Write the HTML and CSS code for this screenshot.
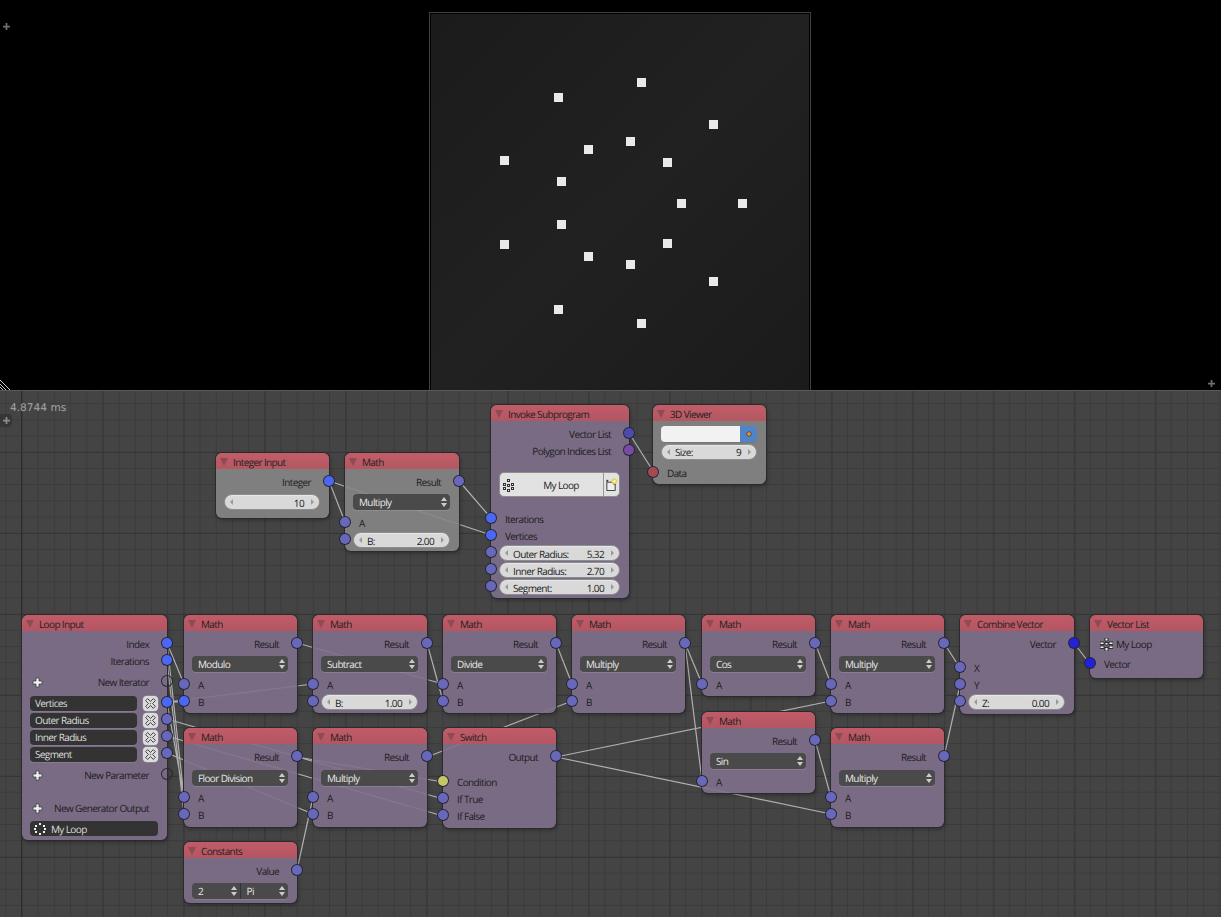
FILE: index.html
```html
<!DOCTYPE html>
<html lang="en">
<head>
<meta charset="utf-8">
<title>Animation Nodes</title>
<link rel="stylesheet" href="styles.css">
</head>
<body>
<svg class="defs" width="0" height="0" aria-hidden="true">
  <symbol id="i-x" viewBox="0 0 16 16"><path d="M4.500 2 8 5.500 11.500 2 14 4.500 10.500 8 14 11.500 11.500 14 8 10.500 4.500 14 2 11.500 5.500 8 2 4.500Z" fill="none" stroke="#333" stroke-width="1.100"/><circle cx="8" cy="8" r="1" fill="#888"/></symbol>
  <symbol id="i-plus" viewBox="0 0 11 11"><path d="M4 1h3v3h3v3H7v3H4V7H1V4h3z" fill="#eee" stroke="#333" stroke-width=".7"/></symbol>
  <symbol id="i-mini" viewBox="0 0 8 8"><path d="M3 0h2v3h3v2H5v3H3V5H0V3h3z" fill="currentColor"/></symbol>
  <symbol id="i-ring" viewBox="0 0 12 12"><path d="M5 0h2v2H5zM1 2h2v2H1zM9 2h2v2H9zM0 5h2v2H0zM10 5h2v2h-2zM1 8h2v2H1zM9 8h2v2H9zM5 10h2v2H5z" fill="#eee"/></symbol>
  <symbol id="i-tree" viewBox="0 0 12 13"><g fill="none" stroke="#333" stroke-width="1" shape-rendering="crispEdges"><path d="M.5 4.500h2v2h-2zM.5 8.500h2v2h-2zM4.500.5h2v2h-2zM4.500 5.500h2v2h-2zM4.500 10.500h2v2h-2zM8.500 4.500h2v2h-2zM8.500 8.500h2v2h-2z"/></g></symbol>
  <symbol id="i-tree-w" viewBox="0 0 13 13"><path d="M5 0h3v3H5zM0 4h4v2.500H0zM5 4.500h3V7H5zM9 4h4v2.500H9zM0 8h4v2.500H0zM9 8h4v2.500H9zM5 9.500h3V13H5z" fill="#eee" stroke="#111" stroke-width=".8"/></symbol>
  <symbol id="i-new" viewBox="0 0 13 14"><path d="M1.500 4.500h7v2h2v7h-9z" fill="#eee" stroke="#333"/><path d="M1 2h2v2H1z" fill="#333"/><circle cx="9.500" cy="3.500" r="3" fill="#e8cf3c"/><path d="M7.800 3.500h3.400M9.500 1.800v3.400" stroke="#fff" stroke-width="1"/></symbol>
</svg>

<section class="preview">
  <button class="corner corner-tl" aria-label="tools"><svg class="ic7"><use href="#i-mini"/></svg></button>
  <svg class="hatch" viewBox="0 0 11 11" aria-hidden="true"><path d="M0 1 10 11M0 5 6 11M0 8 3 11" stroke="#ccc" stroke-width="1" fill="none"/></svg>
  <button class="corner corner-br" aria-label="properties"><svg class="ic7"><use href="#i-mini"/></svg></button>
  <svg class="viewport" viewBox="0 0 382 378" aria-hidden="true">
    <defs>
      <linearGradient id="vp" x1="0" y1="0" x2="1" y2="1"><stop offset="0" stop-color="#1b1b1b"/><stop offset=".5" stop-color="#212121"/><stop offset="1" stop-color="#1b1b1b"/></linearGradient>
    </defs>
    <rect x=".5" y=".5" width="381" height="378" fill="#000" stroke="#404040"/>
    <rect x="2" y="2" width="378" height="376" fill="url(#vp)"/>
    <g fill="#e9e9e9">
      <rect x="125" y="81" width="9" height="9"/><rect x="208" y="66" width="9" height="9"/><rect x="280" y="108" width="9" height="9"/>
      <rect x="71" y="144" width="9" height="9"/><rect x="155" y="133" width="9" height="9"/><rect x="197" y="125" width="9" height="9"/>
      <rect x="234" y="146" width="9" height="9"/><rect x="128" y="165" width="9" height="9"/><rect x="248" y="187" width="9" height="9"/>
      <rect x="309" y="187" width="9" height="9"/><rect x="128" y="208" width="9" height="9"/><rect x="71" y="228" width="9" height="9"/>
      <rect x="155" y="240" width="9" height="9"/><rect x="234" y="227" width="9" height="9"/><rect x="197" y="248" width="9" height="9"/>
      <rect x="280" y="265" width="9" height="9"/><rect x="125" y="293" width="9" height="9"/><rect x="208" y="307" width="9" height="9"/>
    </g>
  </svg>
</section>

<main class="editor">
  <svg class="links" viewBox="0 391 1221 526" aria-hidden="true">
    <g fill="none" stroke="#b0b0b0" stroke-width="1.200">
      <path d="M329 481 345 522M329 481 491 535M459 481 491 518M629 433 653 471"/>
      <path d="M167 643 184 684M167 643 184 797M167 660 184 814M167 702H184M167 702 184 797M167 702 313 684"/>
      <path d="M167 719 443 799M167 736 443 816M167 753 313 814"/>
      <path d="M297 643 443 684M427 643 443 701M556 643 572 684M685 643 702 684M685 643 702 781"/>
      <path d="M297 757 443 782M297 870 313 797M427 757 572 701"/>
      <path d="M556 757 831 701M556 757 831 814M815 643 831 684M815 740 831 797"/>
      <path d="M944 643 960 668M944 757 960 685M1074 643 1090 664"/>
    </g>
  </svg>

  <div class="stat">4.8744 ms</div>
  <button class="tab" aria-label="tools"><svg class="ic7"><use href="#i-mini"/></svg></button>

  <article class="node grey n-int">
    <header class="hdr"><i class="tri"></i>Integer Input</header>
    <div class="body">
      <div class="row out">Integer<b class="sock s-blue"></b></div>
      <div class="field f-top"><i class="la"></i><span></span><span>10</span><i class="ra"></i></div>
    </div>
  </article>

  <article class="node grey n-mathtop">
    <header class="hdr"><i class="tri"></i>Math</header>
    <div class="body">
      <div class="row out">Result<b class="sock"></b></div>
      <div class="dd">Multiply<i class="ud"></i></div>
      <div class="row in">A<b class="sock"></b></div>
      <div class="row in"><div class="field"><i class="la"></i><span>B:</span><span>2.00</span><i class="ra"></i></div><b class="sock"></b></div>
    </div>
  </article>

  <article class="node n-invoke">
    <header class="hdr"><i class="tri"></i>Invoke Subprogram</header>
    <div class="body">
      <div class="row out">Vector List<b class="sock s-vec"></b></div>
      <div class="row out">Polygon Indices List<b class="sock s-pur"></b></div>
      <div class="picker">
        <div class="pick-main"><svg class="ic-tree"><use href="#i-tree"/></svg><span>My Loop</span></div>
        <div class="pick-new"><svg class="ic13"><use href="#i-new"/></svg></div>
      </div>
      <div class="row in">Iterations<b class="sock s-blue"></b></div>
      <div class="row in">Vertices<b class="sock s-blue"></b></div>
      <div class="row in"><div class="field"><i class="la"></i><span>Outer Radius:</span><span>5.32</span><i class="ra"></i></div><b class="sock"></b></div>
      <div class="row in"><div class="field"><i class="la"></i><span>Inner Radius:</span><span>2.70</span><i class="ra"></i></div><b class="sock"></b></div>
      <div class="row in"><div class="field"><i class="la"></i><span>Segment:</span><span>1.00</span><i class="ra"></i></div><b class="sock"></b></div>
    </div>
  </article>

  <article class="node grey n-viewer">
    <header class="hdr"><i class="tri"></i>3D Viewer</header>
    <div class="body">
      <div class="color"><span class="swatch"></span><span class="eye"><i></i></span></div>
      <div class="field f-size"><i class="la"></i><span>Size:</span><span>9</span><i class="ra"></i></div>
      <div class="row in mt5">Data<b class="sock s-red"></b></div>
    </div>
  </article>

  <article class="node n-loop">
    <header class="hdr"><i class="tri"></i>Loop Input</header>
    <div class="body">
      <div class="row out">Index<b class="sock s-blue"></b></div>
      <div class="row out">Iterations<b class="sock s-blue"></b></div>
      <div class="row out mt4 plusrow"><svg class="ic11"><use href="#i-plus"/></svg>New Iterator<b class="sock s-empty"></b></div>
      <div class="param mt4"><span class="name">Vertices</span><span class="xbtn"><svg class="ic13"><use href="#i-x"/></svg></span><b class="sock s-blue"></b></div>
      <div class="param"><span class="name">Outer Radius</span><span class="xbtn"><svg class="ic13"><use href="#i-x"/></svg></span><b class="sock"></b></div>
      <div class="param"><span class="name">Inner Radius</span><span class="xbtn"><svg class="ic13"><use href="#i-x"/></svg></span><b class="sock"></b></div>
      <div class="param"><span class="name">Segment</span><span class="xbtn"><svg class="ic13"><use href="#i-x"/></svg></span><b class="sock"></b></div>
      <div class="row out mt4 plusrow"><svg class="ic11"><use href="#i-plus"/></svg>New Parameter<b class="sock s-empty"></b></div>
      <div class="row out mt16 plusrow"><svg class="ic11"><use href="#i-plus"/></svg>New Generator Output</div>
      <div class="loopname"><svg class="ic12"><use href="#i-ring"/></svg>My Loop</div>
    </div>
  </article>

  <article class="node n-a n-c1">
    <header class="hdr"><i class="tri"></i>Math</header>
    <div class="body">
      <div class="row out">Result<b class="sock"></b></div>
      <div class="dd">Modulo<i class="ud"></i></div>
      <div class="row in">A<b class="sock"></b></div>
      <div class="row in">B<b class="sock s-blue"></b></div>
    </div>
  </article>

  <article class="node n-a n-c2">
    <header class="hdr"><i class="tri"></i>Math</header>
    <div class="body">
      <div class="row out">Result<b class="sock"></b></div>
      <div class="dd">Subtract<i class="ud"></i></div>
      <div class="row in">A<b class="sock"></b></div>
      <div class="row in"><div class="field"><i class="la"></i><span>B:</span><span>1.00</span><i class="ra"></i></div><b class="sock"></b></div>
    </div>
  </article>

  <article class="node n-a n-c3">
    <header class="hdr"><i class="tri"></i>Math</header>
    <div class="body">
      <div class="row out">Result<b class="sock"></b></div>
      <div class="dd">Divide<i class="ud"></i></div>
      <div class="row in">A<b class="sock"></b></div>
      <div class="row in">B<b class="sock"></b></div>
    </div>
  </article>

  <article class="node n-a n-c4">
    <header class="hdr"><i class="tri"></i>Math</header>
    <div class="body">
      <div class="row out">Result<b class="sock"></b></div>
      <div class="dd">Multiply<i class="ud"></i></div>
      <div class="row in">A<b class="sock"></b></div>
      <div class="row in">B<b class="sock"></b></div>
    </div>
  </article>

  <article class="node n-a n-c5">
    <header class="hdr"><i class="tri"></i>Math</header>
    <div class="body">
      <div class="row out">Result<b class="sock"></b></div>
      <div class="dd">Cos<i class="ud"></i></div>
      <div class="row in">A<b class="sock"></b></div>
    </div>
  </article>

  <article class="node n-a n-c6">
    <header class="hdr"><i class="tri"></i>Math</header>
    <div class="body">
      <div class="row out">Result<b class="sock"></b></div>
      <div class="dd">Multiply<i class="ud"></i></div>
      <div class="row in">A<b class="sock"></b></div>
      <div class="row in">B<b class="sock"></b></div>
    </div>
  </article>

  <article class="node n-a n-c7">
    <header class="hdr"><i class="tri"></i>Combine Vector</header>
    <div class="body">
      <div class="row out">Vector<b class="sock s-deep"></b></div>
      <div class="row in mt7">X<b class="sock"></b></div>
      <div class="row in">Y<b class="sock"></b></div>
      <div class="row in"><div class="field"><i class="la"></i><span>Z:</span><span>0.00</span><i class="ra"></i></div><b class="sock"></b></div>
    </div>
  </article>

  <article class="node n-a n-c8">
    <header class="hdr"><i class="tri"></i>Vector List</header>
    <div class="body">
      <div class="row listname"><svg class="ic13"><use href="#i-tree-w"/></svg>My Loop</div>
      <div class="row in mt3">Vector<b class="sock s-deep"></b></div>
    </div>
  </article>

  <article class="node n-b lo n-d1">
    <header class="hdr"><i class="tri"></i>Math</header>
    <div class="body">
      <div class="row out">Result<b class="sock"></b></div>
      <div class="dd">Floor Division<i class="ud"></i></div>
      <div class="row in">A<b class="sock"></b></div>
      <div class="row in">B<b class="sock"></b></div>
    </div>
  </article>

  <article class="node n-b lo n-d2">
    <header class="hdr"><i class="tri"></i>Math</header>
    <div class="body">
      <div class="row out">Result<b class="sock"></b></div>
      <div class="dd">Multiply<i class="ud"></i></div>
      <div class="row in">A<b class="sock"></b></div>
      <div class="row in">B<b class="sock"></b></div>
    </div>
  </article>

  <article class="node n-b lo n-switch">
    <header class="hdr"><i class="tri"></i>Switch</header>
    <div class="body">
      <div class="row out">Output<b class="sock"></b></div>
      <div class="row in mt8">Condition<b class="sock s-yel"></b></div>
      <div class="row in">If True<b class="sock"></b></div>
      <div class="row in">If False<b class="sock"></b></div>
    </div>
  </article>

  <article class="node n-sin">
    <header class="hdr"><i class="tri"></i>Math</header>
    <div class="body">
      <div class="row out">Result<b class="sock"></b></div>
      <div class="dd">Sin<i class="ud"></i></div>
      <div class="row in">A<b class="sock"></b></div>
    </div>
  </article>

  <article class="node n-b lo n-d3">
    <header class="hdr"><i class="tri"></i>Math</header>
    <div class="body">
      <div class="row out">Result<b class="sock"></b></div>
      <div class="dd">Multiply<i class="ud"></i></div>
      <div class="row in">A<b class="sock"></b></div>
      <div class="row in">B<b class="sock"></b></div>
    </div>
  </article>

  <article class="node n-const">
    <header class="hdr"><i class="tri"></i>Constants</header>
    <div class="body">
      <div class="row out">Value<b class="sock"></b></div>
      <div class="dd2"><span class="seg">2<i class="ud"></i></span><span class="seg">Pi<i class="ud"></i></span></div>
    </div>
  </article>
</main>
</body>
</html>
```

FILE: styles.css
```css
* { box-sizing: border-box; }
html, body { margin: 0; height: 100%; overflow: hidden; }
body {
  background: #000;
  font-family: "Open Sans", "Noto Sans", sans-serif;
  font-size: 10px;
  letter-spacing: -.62px;
  text-rendering: geometricPrecision;
  color: #1d1d1d;
}
.defs { position: absolute; }

/* upper preview area */
.preview { position: relative; height: 390px; background: #000; padding: 12px 0 0 429px; }
.viewport { display: block; width: 382px; height: 378px; }
.corner {
  position: absolute; display: flex; border: 0; padding: 0;
  background: transparent; color: #6e6e6e;
}
.corner-tl { left: 3px; top: 23px; }
.corner-br { right: 6px; top: 380px; }
.hatch { position: absolute; left: 0; top: 379px; width: 11px; height: 11px; }

/* node editor grid */
.editor {
  position: relative;
  height: 527px;
  overflow: hidden;
  border-top: 1px solid #5a5a5a;
  background-color: #444;
  background-image:
    linear-gradient(#2d2d2d, #2d2d2d),
    linear-gradient(to right, #363636 1px, transparent 1px),
    linear-gradient(to bottom, #363636 1px, transparent 1px),
    linear-gradient(to right, #3b3b3b 1px, transparent 1px),
    linear-gradient(to bottom, #3b3b3b 1px, transparent 1px);
  background-size: 1px 100%, 81px 100%, 100% 81px, 16.2px 100%, 100% 16.2px;
  background-position: 21px 0, 21.5px 0, 0 61px, 5.3px 0, 0 12.2px;
  background-repeat: no-repeat, repeat-x, repeat-y, repeat-x, repeat-y;
}
.links { position: absolute; left: 0; top: 0; width: 1221px; height: 526px; }
.stat {
  position: absolute; left: 10px; top: 10px;
  font: 10.6px/14px "DejaVu Sans", sans-serif; letter-spacing: 0; color: #a4a4a4;
}
.tab {
  position: absolute; left: 0; top: 23px; width: 12px; height: 13px; border: 0; padding: 0;
  display: flex; align-items: center; justify-content: center;
  border-radius: 0 4px 4px 0; background: #363636; color: #8c8c8c;
}
.ic7 { width: 7px; height: 7px; display: block; }

/* node */
.node {
  position: absolute;
  width: 113px;
  border-radius: 6px;
  background: rgba(128, 112, 140, .9);
  box-shadow: 0 0 0 1px #2b2b2b, 1px 2px 4px rgba(0, 0, 0, .35);
  padding-bottom: 2px;
}
.node.grey { background: rgba(134, 134, 134, .9); }
.node.lo { padding-bottom: 3px; }
.hdr {
  height: 16px;
  display: flex; align-items: center;
  border-radius: 6px 6px 0 0;
  background: linear-gradient(rgba(198, 90, 102, .93), rgba(184, 84, 95, .93));
  line-height: 16px;
  padding: 2px 0 0 4px;
  color: #222;
}
.tri {
  width: 0; height: 0; margin: -1px 5px 0 0;
  border-left: 4px solid transparent; border-right: 4px solid transparent;
  border-top: 8px solid #8e4a55;
}
.body { padding-top: 5px; }

.row { position: relative; height: 17px; line-height: 17px; white-space: nowrap; }
.row.out { text-align: right; padding-right: 18px; }
.row.in { padding-left: 14px; }
.mt3 { margin-top: 3px; }
.mt4 { margin-top: 4px; }
.mt5 { margin-top: 5px; }
.mt7 { margin-top: 7px; }
.mt8 { margin-top: 8px; }
.mt16 { margin-top: 16px; }

.sock {
  position: absolute; top: 2px; left: -5px;
  width: 10px; height: 10px; border-radius: 50%;
  background: #6868bb;
  box-shadow: 0 0 0 1px #25253a;
}
.row.out > .sock, .param > .sock { left: auto; right: -5px; }
.s-blue { background: #4a68f4; }
.s-vec { background: #4b4bab; }
.s-deep { background: #2222d6; }
.s-pur { background: #7a4aa6; }
.s-red { background: #a54a4f; }
.s-yel { background: #c6c664; }
.s-empty { background: transparent; }

/* widgets */
.field {
  display: flex; align-items: center; justify-content: space-between;
  position: relative;
  height: 16px; margin: 0 9px 0 8px; padding: 1px 15px 0 13px;
  border-radius: 8px; line-height: 14px;
  background: #d9d9d9; border: 1px solid #8d8d8d;
  box-shadow: inset 0 1px 1px #e8e8e8;
  color: #222;
}
.row.in > .field { margin-left: -6px; }
.f-top { margin-top: 3px; margin-bottom: 6px; }
.f-size { margin-top: 1.5px; }
.la, .ra {
  position: absolute; top: 4px; width: 0; height: 0;
  border-top: 3px solid transparent; border-bottom: 3px solid transparent;
}
.la { left: 5px; border-right: 3.5px solid #999; }
.ra { right: 5px; border-left: 3.5px solid #999; }

.dd {
  position: relative;
  height: 16px; margin: 3px 9px 5px 8px; padding-left: 6px;
  border-radius: 4px; line-height: 17px;
  background: #4a4a4a;
  box-shadow: 0 1px 0 rgba(255, 255, 255, .12);
  color: #e8e8e8;
}
.lo .dd { margin: 4px 9px 4px 8px; }
.ud { position: absolute; right: 3px; top: 3px; width: 6px; height: 10px; }
.ud::before, .ud::after {
  content: ""; position: absolute; left: 0; width: 0; height: 0;
  border-left: 3px solid transparent; border-right: 3px solid transparent;
}
.ud::before { top: 0; border-bottom: 4px solid #ccc; }
.ud::after { bottom: 0; border-top: 4px solid #ccc; }

.dd2 {
  display: flex; height: 16px; margin: 3px 9px 2px 8px;
  border-radius: 4px;
  background: #4a4a4a; color: #e8e8e8; line-height: 17px;
  box-shadow: 0 1px 0 rgba(255, 255, 255, .12);
}
.seg { position: relative; flex: 1; padding-left: 6px; }
.seg + .seg { border-left: 1px solid #333; }

.picker {
  display: flex; height: 25px; margin: 12px 9px 14px 8px;
  border: 1px solid #8d8d8d; border-radius: 5px; background: #e2e2e2; color: #222;
}
.pick-main { flex: 1; display: flex; align-items: center; padding: 1px 0 0 3px; }
.pick-main span { flex: 1; text-align: center; padding-left: 4px; }
.pick-new { width: 16px; display: flex; align-items: center; justify-content: center; border-left: 1px solid #999; }

.color {
  display: flex; height: 16px; margin: 0 9px 0 8px;
  border-radius: 4px; overflow: hidden; box-shadow: 0 1px 0 #777;
}
.swatch { flex: 1; background: #f2f2f2; }
.eye { width: 17px; background: #5183c9; display: flex; align-items: center; justify-content: center; }
.eye i { width: 4px; height: 4px; border-radius: 50%; background: #e8902c; box-shadow: 0 0 0 .5px #333; }

.ic11 { width: 11px; height: 11px; }
.ic12 { width: 12px; height: 12px; flex: none; margin-right: 5px; }
.ic13 { width: 13px; height: 13px; flex: none; }
.ic-tree { width: 12px; height: 13px; flex: none; }

.plusrow > svg { position: absolute; left: 10px; top: 3px; }
.param { position: relative; display: flex; height: 17px; padding: 1px 9px 0 8px; gap: 6px; }
.name {
  width: 107px; height: 14.5px; padding-left: 5px; border-radius: 4px; line-height: 15px;
  background: #333; color: #ddd; box-shadow: 0 1px 0 rgba(255, 255, 255, .1);
}
.xbtn {
  width: 15px; height: 15px; display: flex; align-items: center; justify-content: center;
  border-radius: 4px; background: #dcdcdc; box-shadow: 0 0 0 .5px #999;
}
.loopname {
  display: flex; align-items: center;
  height: 15px; margin: 4px 9px 0 8px; padding-left: 4px;
  border-radius: 4px; background: #333; color: #ddd;
}
.listname { display: flex; align-items: center; gap: 3px; padding-left: 10px; }

/* node places on the canvas */
.n-int { left: 216px; top: 62px; height: 65px; }
.n-mathtop { left: 345px; top: 62px; width: 114px; }
.n-invoke { left: 491px; top: 14px; width: 138px; }
.n-viewer { left: 653px; top: 14px; }
.n-loop { left: 22px; top: 224px; width: 145px; height: 225px; }
.n-a { top: 224px; }
.n-b { top: 337px; }
.n-c1 { left: 184px; }
.n-c2 { left: 313px; width: 114px; }
.n-c3 { left: 443px; }
.n-c4 { left: 572px; }
.n-c5 { left: 702px; }
.n-c6 { left: 831px; }
.n-c7 { left: 960px; width: 114px; height: 99px; }
.n-c8 { left: 1090px; height: 63px; }
.n-d1 { left: 184px; }
.n-d2 { left: 313px; width: 114px; }
.n-switch { left: 443px; }
.n-sin { left: 702px; top: 321px; }
.n-d3 { left: 831px; }
.n-const { left: 184px; top: 451px; }
```
